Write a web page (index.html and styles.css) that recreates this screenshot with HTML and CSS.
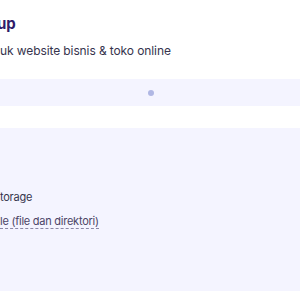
FILE: index.html
```html
<!DOCTYPE html>
<html lang="id">
<head>
<meta charset="utf-8">
<link rel="stylesheet" href="styles.css">
</head>
<body>
<div class="card">
  <header class="card-head">
    <h2 class="title">up</h2>
    <p class="subtitle">uk website bisnis &amp; toko online</p>
  </header>
  <div class="slider"><span class="dot"></span></div>
  <div class="spacer"></div>
  <div class="features">
    <p class="feature">torage</p>
    <p class="feature"><span class="tip">le (file dan direktori)</span></p>
  </div>
</div>
</body>
</html>
```
FILE: styles.css
```css
html, body {
  margin: 0;
  padding: 0;
  background: #ffffff;
}
body {
  font-family: Inter, "DejaVu Sans", sans-serif;
  width: 300px;
  height: 300px;
  overflow: hidden;
}
.card {
  display: flex;
  flex-direction: column;
}
.card-head {
  padding-top: 15px;
  height: 79px;
  box-sizing: border-box;
}
.title {
  margin: 0 0 0 -3px;
  font-size: 15px;
  line-height: 18px;
  font-weight: 700;
  color: #2f1c6a;
}
.subtitle {
  margin: 10px 0 0;
  font-size: 12px;
  line-height: 16px;
  letter-spacing: -0.1px;
  color: #36344d;
}
.slider {
  height: 27px;
  background: #f4f4ff;
  display: flex;
  align-items: center;
  justify-content: center;
}
.dot {
  width: 6px;
  height: 6px;
  border-radius: 50%;
  background: #b0b7e4;
  margin-left: 2px;
}
.spacer {
  height: 22px;
}
.features {
  height: 163px;
  background: #f4f4ff;
  padding-top: 61px;
  box-sizing: border-box;
}
.feature {
  margin: 0 0 8px;
  font-size: 11px;
  line-height: 16px;
  letter-spacing: -0.25px;
  color: #36344d;
}
.tip {
  color: #4b4466;
  border-bottom: 1px dashed #8c88a6;
}
```
